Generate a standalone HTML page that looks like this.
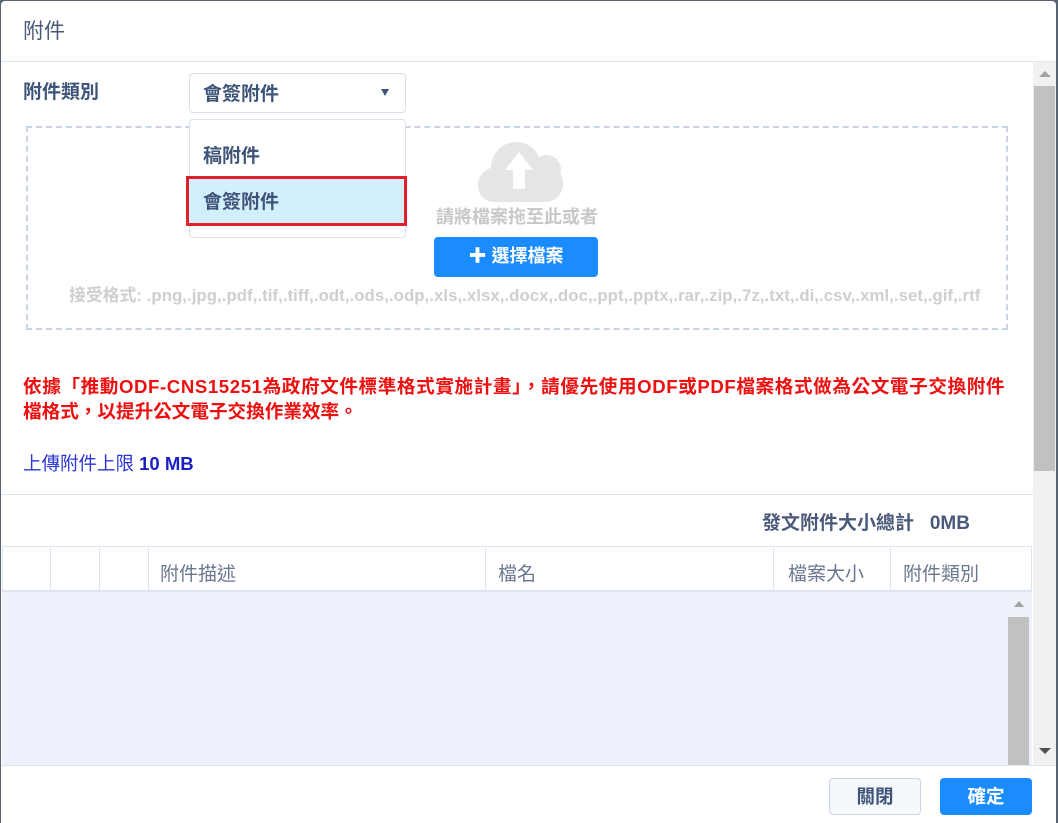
<!DOCTYPE html>
<html><head><meta charset="utf-8"><style>
*{box-sizing:border-box;margin:0;padding:0}
body{width:1058px;height:823px;overflow:hidden;background:#5a6370;font-family:"Liberation Sans","Noto Sans CJK TC",sans-serif;position:relative}
.dlg{position:absolute;left:1px;top:1px;width:1055px;height:822px;background:#fff;border-radius:4px 4px 0 0;overflow:hidden}
.a{position:absolute;white-space:nowrap}
</style></head><body>
<div class="dlg">
<div class="a" style="left:22px;top:14px;font-size:21px;color:#4a5a78">附件</div>
<div class="a" style="left:0;top:60px;width:1055px;height:1px;background:#dfe5ee"></div>
<!-- outer scrollbar -->
<div class="a" style="left:1032px;top:61px;width:23px;height:704px;background:#f1f1f1"></div>
<div class="a" style="left:1033px;top:85px;width:21px;height:385px;background:#c1c1c1"></div>
<div class="a" style="left:1038px;top:70px;width:0;height:0;border-left:6px solid transparent;border-right:6px solid transparent;border-bottom:6px solid #a3a3a3"></div>
<div class="a" style="left:1038px;top:747px;width:0;height:0;border-left:6px solid transparent;border-right:6px solid transparent;border-top:6px solid #505050"></div>

<div class="a" style="left:22px;top:76px;font-size:19px;color:#3e5479;font-weight:bold">附件類別</div>
<div class="a" style="left:188px;top:72px;width:217px;height:40px;border:1px solid #d8dee8;border-radius:4px"></div>
<div class="a" style="left:202px;top:78px;font-size:19px;color:#3e5479;font-weight:bold">會簽附件</div>
<div class="a" style="left:380px;top:88px;width:0;height:0;border-left:4.5px solid transparent;border-right:4.5px solid transparent;border-top:7px solid #3e5479"></div>

<div class="a" style="left:25px;top:125px;width:982px;height:204px;border:2px dashed #c9d3e3"></div>
<svg class="a" style="left:476px;top:139px" width="86" height="64" viewBox="0 0 86 64"><path d="M18 62C8 62 1 55 1 45C1 36 7 30 14 28C14 14 25 2 39 2C50 2 58 8 62 17C64 16 67 15 70 15C78 15 84 22 84 30C84 31 84 32 83 33C85 36 86 40 86 44C86 54 78 62 68 62Z" fill="#e5e5e5"/><path d="M42 12L28 30H36V49H48V30H56Z" fill="#fff"/></svg>
<div class="a" style="left:435px;top:202px;font-size:18px;color:#c8c8c8;font-weight:bold">請將檔案拖至此或者</div>
<div class="a" style="left:433px;top:236px;width:164px;height:40px;background:#1a8cff;border-radius:4px;color:#fff;font-size:18px;font-weight:bold;text-align:center;line-height:39px">✚ 選擇檔案</div>
<div class="a" style="left:68px;top:281px;font-size:16.8px;color:#cfcfcf;font-weight:bold;letter-spacing:0.05px">接受格式: .png,.jpg,.pdf,.tif,.tiff,.odt,.ods,.odp,.xls,.xlsx,.docx,.doc,.ppt,.pptx,.rar,.zip,.7z,.txt,.di,.csv,.xml,.set,.gif,.rtf</div>

<!-- dropdown -->
<div class="a" style="left:188px;top:118px;width:217px;height:119px;background:#fff;border:1px solid #dde3ea;border-radius:4px"></div>
<div class="a" style="left:202px;top:140px;font-size:19px;color:#3e5479;font-weight:bold">稿附件</div>
<div class="a" style="left:185px;top:175px;width:221px;height:50px;background:#d3effc;border:3px solid #e0202a"></div>
<div class="a" style="left:202px;top:186px;font-size:19px;color:#3e5479;font-weight:bold">會簽附件</div>

<div class="a" style="left:22px;top:373px;font-size:18.6px;line-height:25px;color:#ec1010;font-weight:bold"><span style="letter-spacing:0.6px">依據「推動ODF-CNS15251為政府文件標準格式實施計畫」，請優先使用ODF或PDF檔案格式做為公文電子交換附件</span><br>檔格式，以提升公文電子交換作業效率。</div>
<div class="a" style="left:22px;top:449px;font-size:18.5px;color:#2b36d4">上傳附件上限 <b style="color:#1a1fc4">10 MB</b></div>

<div class="a" style="left:0;top:493px;width:1032px;height:1px;background:#dfe5ee"></div>
<div class="a" style="left:761px;top:507px;font-size:19px;color:#4a5a78;font-weight:bold">發文附件大小總計&nbsp;&nbsp;&nbsp;0MB</div>

<!-- table -->
<div class="a" style="left:1px;top:545px;width:1030px;height:46px;border:1px solid #dfe5ee;border-bottom:2px solid #dfe5ee"></div>
<div class="a" style="left:49px;top:546px;width:1px;height:44px;background:#dfe5ee"></div>
<div class="a" style="left:98px;top:546px;width:1px;height:44px;background:#dfe5ee"></div>
<div class="a" style="left:147px;top:546px;width:1px;height:44px;background:#dfe5ee"></div>
<div class="a" style="left:484px;top:546px;width:1px;height:44px;background:#dfe5ee"></div>
<div class="a" style="left:772px;top:546px;width:1px;height:44px;background:#dfe5ee"></div>
<div class="a" style="left:889px;top:546px;width:1px;height:44px;background:#dfe5ee"></div>
<div class="a" style="left:159px;top:558px;font-size:19px;color:#6b7790">附件描述</div>
<div class="a" style="left:497px;top:558px;font-size:19px;color:#6b7790">檔名</div>
<div class="a" style="left:787px;top:558px;font-size:19px;color:#6b7790">檔案大小</div>
<div class="a" style="left:902px;top:558px;font-size:19px;color:#6b7790">附件類別</div>
<div class="a" style="left:1px;top:591px;width:1030px;height:174px;background:#edf1fb"></div>
<div class="a" style="left:1007px;top:593px;width:22px;height:172px;background:#eef1f8"></div>
<div class="a" style="left:1007px;top:616px;width:21px;height:149px;background:#c1c1c1"></div>
<div class="a" style="left:1013px;top:600px;width:0;height:0;border-left:5px solid transparent;border-right:5px solid transparent;border-bottom:6px solid #a3a3a3"></div>

<div class="a" style="left:0;top:764px;width:1055px;height:1px;background:#dfe5ee"></div>
<div class="a" style="left:828px;top:777px;width:92px;height:37px;background:#f5f8fc;border:1px solid #cdd5e2;border-radius:4px;text-align:center;line-height:35px;font-size:18.5px;font-weight:bold;color:#3e5479">關閉</div>
<div class="a" style="left:939px;top:777px;width:92px;height:37px;background:#1a8cff;border-radius:4px;text-align:center;line-height:37px;font-size:18.5px;font-weight:bold;color:#fff">確定</div>
</div>
</body></html>
